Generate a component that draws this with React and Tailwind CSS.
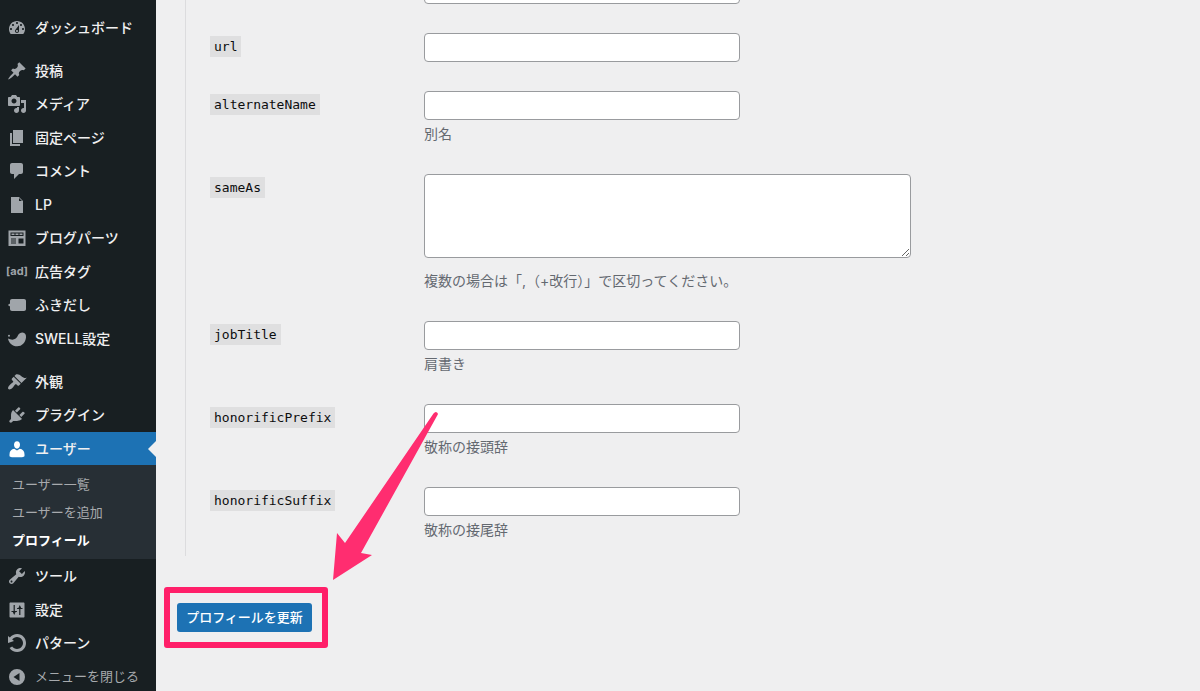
import clsx from "clsx";

const ICONS = {
  dashboard: "M3.76 16h12.48c1.1-1.37 1.76-3.11 1.76-5 0-4.42-3.58-8-8-8s-8 3.58-8 8c0 1.89.66 3.63 1.76 5zM10 4c.55 0 1 .45 1 1s-.45 1-1 1-1-.45-1-1 .45-1 1-1zM6 6c.55 0 1 .45 1 1s-.45 1-1 1-1-.45-1-1 .45-1 1-1zm8 0c.55 0 1 .45 1 1s-.45 1-1 1-1-.45-1-1 .45-1 1-1zm-5.37 5.55L12 7v6c0 1.1-.9 2-2 2s-2-.9-2-2c0-.57.24-1.08.63-1.45zM4 10c.55 0 1 .45 1 1s-.45 1-1 1-1-.45-1-1 .45-1 1-1zm12 0c.55 0 1 .45 1 1s-.45 1-1 1-1-.45-1-1 .45-1 1-1zm-5 3c0-.55-.45-1-1-1s-1 .45-1 1 .45 1 1 1 1-.45 1-1z",
  post: "M10.44 3.02l1.82-1.82 6.36 6.35-1.83 1.82c-1.05-.68-2.48-.57-3.41.36l-.75.75c-.92.93-1.04 2.35-.35 3.41l-1.83 1.82-2.41-2.41-2.8 2.79c-.42.42-3.38 2.71-3.8 2.29s1.86-3.39 2.28-3.81l2.79-2.79L4.1 9.36l1.83-1.82c1.05.69 2.48.57 3.4-.36l.75-.75c.93-.92 1.05-2.35.36-3.41z",
  media: "M13 11V4c0-.55-.45-1-1-1h-1.67L9 1H5L3.67 3H2c-.55 0-1 .45-1 1v7c0 .55.45 1 1 1h10c.55 0 1-.45 1-1zM7 4.5c1.38 0 2.5 1.12 2.5 2.5S8.38 9.5 7 9.5 4.5 8.38 4.5 7 5.62 4.5 7 4.5zM14 6h5v10.5c0 1.38-1.12 2.5-2.5 2.5S14 17.88 14 16.5s1.12-2.5 2.5-2.5c.17 0 .34.02.5.05V9h-3V6zm-4 8.05V13h2v3.5c0 1.38-1.12 2.5-2.5 2.5S7 17.88 7 16.5 8.12 14 9.5 14c.17 0 .34.02.5.05z",
  page: "M6 15V2h10v13H6zm-1 1h8v2H3V5h2v11z",
  comments: "M5 2h9c1.1 0 2 .9 2 2v7c0 1.1-.9 2-2 2h-2l-5 5v-5H5c-1.1 0-2-.9-2-2V4c0-1.1.9-2 2-2z",
  file: "M12 2l4 4v12H4V2h8zm0 4h3l-3-3z",
  parts: "M1.5 2.500h17v15.500h-17zM3.5 4.500v3.500h13V4.500zM4.5 5.500h3v1.500h-3zM8.5 5.500h3v1.500h-3zM12.500 5.500h3v1.500h-3zM11.500 10.500v5h5v-5zM4 10.500v1h5v-1zM4 12.500v1h5v-1zM4 14.500v1h5v-1z",
  balloon: "M5 4h12c1.200 0 2 .8 2 2v8c0 1.200-.8 2-2 2H5c-1.200 0-2-.8-2-2v-2.500L.8 10 3 8.500V6c0-1.200.8-2 2-2z",
  swell: "M1 9.500C3.500 10.800 6.500 11.300 8.700 9.600 11 7.800 11 3.500 15.500 3.500c2.600 0 3.800 2.200 3.500 5C18.500 13.500 15 17.300 10.200 17.300 5.200 17.300 1.800 14 1 9.500zM2 5.700a1 1 0 1 0 0 2 1 1 0 0 0 0-2z",
  appearance: "M14.48 11.06L7.41 3.99l1.5-1.5c.5-.56 2.3-.47 3.51.32 1.21.8 1.43 1.28 2.91 2.1 1.18.64 2.45 1.26 4.45.85zm-.71.71L6.7 4.7 4.93 6.47c-.39.39-.39 1.02 0 1.41l1.06 1.06c.39.39.39 1.03 0 1.42-.6.6-1.43 1.11-2.21 1.69-.35.26-.7.53-1.01.84C1.43 14.23.4 16.08 1.4 17.07c.99 1 2.84-.03 4.18-1.36.31-.31.58-.66.85-1.02.57-.78 1.08-1.61 1.69-2.21.39-.39 1.02-.39 1.41 0l1.06 1.06c.39.39 1.02.39 1.41 0z",
  plugins: "M13.11 4.36L9.87 7.6 8 5.73l3.24-3.24c.35-.34 1.05-.2 1.56.32.52.51.66 1.21.31 1.55zm-8 1.77l.91-1.12 9.01 9.01-1.19.84c-.71.71-2.63 1.16-3.82 1.16H6.14L4.9 17.26c-.59.59-1.54.59-2.12 0-.59-.58-.59-1.53 0-2.12l1.24-1.24v-3.88c0-1.13.4-3.19 1.09-3.89zm7.26 3.97l3.24-3.24c.34-.35 1.04-.21 1.55.31.52.51.66 1.21.31 1.55l-3.24 3.25z",
  users: "M10 2.200c-2 0-3 1.700-3 3.600 0 2 1.300 3.900 3 3.900s3-1.900 3-3.900c0-1.900-1-3.600-3-3.600zM2.500 15.200c0-3 2-5.200 4.700-5.400L10 11.500l2.800-1.700c2.700.2 4.700 2.400 4.700 5.400V17c0 1-1.500 1.300-7.500 1.300S2.500 18 2.500 17z",
  tools: "M16.68 9.77c-1.34 1.34-3.3 1.67-4.95.99l-5.41 6.52c-.99.99-2.59.99-3.58 0s-.99-2.59 0-3.57l6.52-5.42c-.68-1.65-.35-3.61.99-4.95 1.28-1.28 3.12-1.62 4.72-1.06l-2.89 2.89 2.82 2.82 2.86-2.87c.53 1.58.18 3.39-1.08 4.65zM3.81 16.21c.4.39 1.04.39 1.43 0 .4-.4.4-1.04 0-1.43-.39-.4-1.03-.4-1.43 0-.39.39-.39 1.03 0 1.43z",
  settings: "M3.500 2.500h13c.55 0 1 .45 1 1v13c0 .55-.45 1-1 1h-13c-.55 0-1-.45-1-1v-13c0-.55.45-1 1-1zM6.600 5v6H4.500v1h1.300L7.200 15l1.400-3H9.900v-1H7.800V5zM12.200 15h1.200V9h2.100V8h-1.300L12.800 5l-1.400 3h-1.300v1h2.100z",
  rotate: "M10.25 1.02c5.1 0 8.75 4.04 8.75 9s-3.65 9-8.75 9c-3.2 0-6.02-1.59-7.68-3.99l2.59-1.52c1.1 1.5 2.86 2.51 4.84 2.51 3.3 0 6-2.79 6-6s-2.7-6-6-6c-1.97 0-3.72 1-4.82 2.49L7 8.02l-6 2v-7L2.89 4.6c1.69-2.17 4.36-3.58 7.36-3.58z",
  collapse: "M10 2a8 8 0 1 0 0 16 8 8 0 0 0 0-16zM12.500 6v8L6.500 10z",
};

const MENU = [
  [{ icon: "dashboard", label: "ダッシュボード" }],
  [
    { icon: "post", label: "投稿" },
    { icon: "media", label: "メディア" },
    { icon: "page", label: "固定ページ" },
    { icon: "comments", label: "コメント" },
    { icon: "file", label: "LP" },
    { icon: "parts", label: "ブログパーツ" },
    { icon: "ad", label: "広告タグ" },
    { icon: "balloon", label: "ふきだし" },
    { icon: "swell", label: "SWELL設定" },
  ],
  [
    { icon: "appearance", label: "外観" },
    { icon: "plugins", label: "プラグイン" },
    {
      icon: "users",
      label: "ユーザー",
      current: true,
      children: ["ユーザー一覧", "ユーザーを追加", "プロフィール"],
    },
    { icon: "tools", label: "ツール" },
    { icon: "settings", label: "設定" },
    { icon: "rotate", label: "パターン" },
    { icon: "collapse", label: "メニューを閉じる", button: true },
  ],
];

const FIELDS = [
  { name: "image", hideLabel: true },
  { name: "url" },
  { name: "alternateName", help: "別名" },
  { name: "sameAs", help: "複数の場合は「,（+改行）」で区切ってください。", multiline: true },
  { name: "jobTitle", help: "肩書き" },
  { name: "honorificPrefix", help: "敬称の接頭辞" },
  { name: "honorificSuffix", help: "敬称の接尾辞" },
];

function MenuIcon({ name }) {
  if (name === "ad") {
    return <span className="flex w-5 justify-center text-[11px] font-bold">[ad]</span>;
  }
  return (
    <svg viewBox="0 0 20 20" className="size-5 shrink-0" fill="currentColor" fillRule="evenodd" aria-hidden="true">
      <path d={ICONS[name]} />
    </svg>
  );
}

function MenuItem({ item }) {
  const Tag = item.button ? "button" : "a";
  return (
    <li className="[&>:first-child]:h-[33px] even:[&>:first-child]:h-[34px]">
      <Tag
        {...(item.button ? { type: "button" } : { href: "#" })}
        className={clsx(
          "relative flex w-full items-center gap-2 pl-[7px] whitespace-nowrap",
          item.current && "bg-[#1d72b4]",
          item.button ? "text-[13px] text-[#a7aaad]" : "text-sm font-medium text-[#f0f0f1]"
        )}
      >
        <span className={clsx("flex", item.current ? "text-white" : "text-[#a0a5aa]")}>
          <MenuIcon name={item.icon} />
        </span>
        {item.label}
        {item.current && (
          <span className="absolute top-1/2 right-0 -translate-y-1/2 border-8 border-transparent border-r-[#efeff0]" />
        )}
      </Tag>
      {item.children && (
        <ul className="bg-[#272f35] py-[5px] text-[13px] leading-7">
          {item.children.map((child) => (
            <li key={child}>
              <a
                href="#"
                className={clsx("block pl-3", child === "プロフィール" ? "font-bold text-white" : "text-[#a7aaad]")}
              >
                {child}
              </a>
            </li>
          ))}
        </ul>
      )}
    </li>
  );
}

function Field({ field }) {
  return (
    <tr className="align-top">
      <th scope="row" className="w-[238px] pt-[17px] pl-6 text-left font-normal">
        {!field.hideLabel && (
          <label
            htmlFor={field.name}
            className="block w-fit bg-[#dfdfe0] px-1 font-['DejaVu_Sans_Mono',monospace] text-[13px] leading-[21px] text-[#0c0d0e]"
          >
            {field.name}
          </label>
        )}
      </th>
      <td className="pt-[14px] pb-[15px]">
        {field.multiline ? (
          <textarea
            id={field.name}
            className="block h-[84px] w-[487px] max-w-full rounded border border-[#999b9e] bg-white"
          />
        ) : (
          <input
            id={field.name}
            type="text"
            aria-label={field.hideLabel ? field.name : undefined}
            className="block h-[29px] w-[316px] rounded border border-[#999b9e] bg-white px-2"
          />
        )}
        {field.help && (
          <p className={clsx("mb-px text-sm leading-[21px] text-[#646970]", field.multiline ? "mt-3" : "mt-[3px]")}>
            {field.help}
          </p>
        )}
      </td>
    </tr>
  );
}

export default function App() {
  return (
    <div className="flex h-screen overflow-hidden bg-[#efeff0] font-['Inter','Noto_Sans_CJK_JP',sans-serif]">
      <nav className="flex w-[156px] shrink-0 flex-col gap-[10px] bg-[#181f22] pt-[11px]">
        {MENU.map((group) => (
          <ul key={group[0].icon}>
            {group.map((item) => (
              <MenuItem key={item.icon} item={item} />
            ))}
          </ul>
        ))}
      </nav>

      <main className="min-w-0 flex-1">
        <form onSubmit={(e) => e.preventDefault()}>
          {/* scrolled down: the first row is cut off by the top of the window */}
          <div className="-mt-[39px] ml-[29px] border-l border-[#dcdcde]">
            <table className="w-full table-fixed border-collapse">
              <tbody>
                {FIELDS.map((field) => (
                  <Field key={field.name} field={field} />
                ))}
              </tbody>
            </table>
          </div>

          <div className="relative mt-[47px] ml-[21px] w-fit">
            <button
              type="submit"
              className="block h-[29px] w-[135px] rounded-[3px] bg-[#1d72b4] text-[13px] font-medium whitespace-nowrap text-white"
            >
              プロフィールを更新
            </button>
            {/* highlight frame and arrow */}
            <span className="pointer-events-none absolute -top-4 -right-4 -bottom-4 -left-[13px] rounded-[3px] border-6 border-[#ff1f69]" />
            <svg
              viewBox="0 0 108 172"
              className="pointer-events-none absolute bottom-[50px] left-[154px] h-[172px] w-[108px]"
              fill="#ff2d70"
              aria-hidden="true"
            >
              <path d="M2 170 6 123 14 133 102.500 3.500Q104.500 1 106 2.500T106.500 5L30 143 41 145Z" />
            </svg>
          </div>
        </form>
      </main>
    </div>
  );
}
